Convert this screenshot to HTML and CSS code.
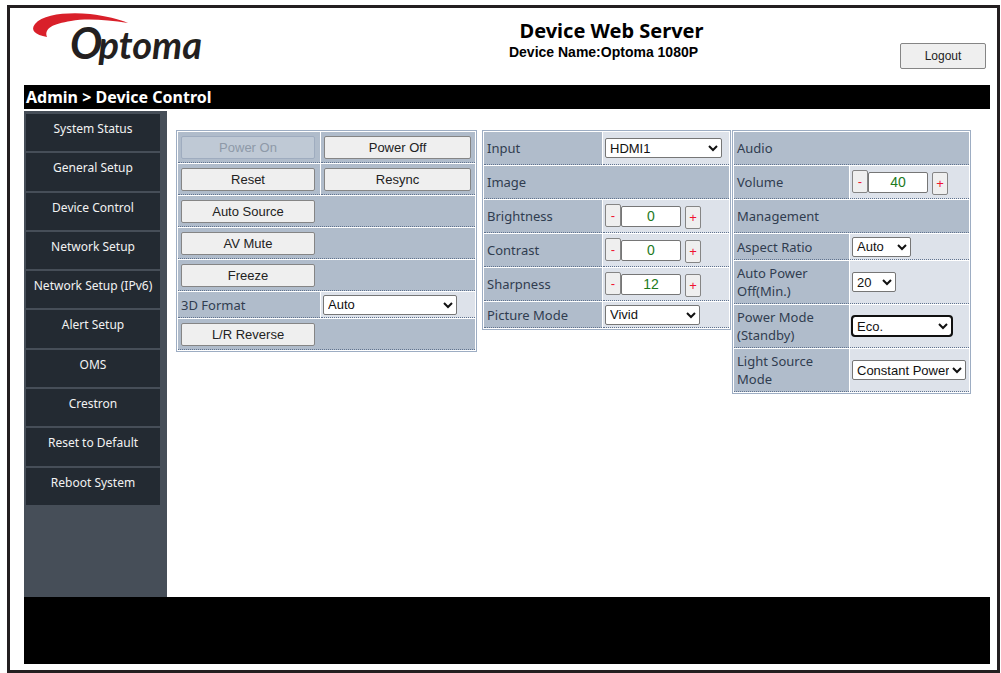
FILE: index.html
```html
<!DOCTYPE html>
<html lang="en">
<head>
<meta charset="utf-8">
<title>Device Web Server</title>
<link rel="stylesheet" href="styles.css">
</head>
<body>
<div class="frame">
  <header class="header">
    <svg class="logo" viewBox="0 0 190 66" role="img" aria-label="Optoma">
      <path class="logo-swoosh" d="M23 24 C11 22 6 17 11 11 C19 1 44 -1 66 1 C82 3 95 6 104 10 C83 7 63 5 47 8 C29 11 20 15 23 24 Z"/>
      <text class="logo-text" x="46" y="46"><tspan class="logo-cap">O</tspan><tspan dx="-4">ptoma</tspan></text>
    </svg>
    <div class="titles">
      <h1 class="title">Device Web Server</h1>
      <p class="device">Device Name:Optoma 1080P</p>
    </div>
    <div class="session"><button class="button logout" type="button">Logout</button></div>
  </header>
  <h2 class="crumb">Admin &gt; Device Control</h2>
  <div class="body">
    <nav class="sidebar">
      <div class="menu">
        <a href="#status">System Status</a>
        <a href="#general">General Setup</a>
        <a href="#control">Device Control</a>
        <a href="#network">Network Setup</a>
        <a href="#ipv6">Network Setup (IPv6)</a>
        <a href="#alert">Alert Setup</a>
        <a href="#oms">OMS</a>
        <a href="#crestron">Crestron</a>
        <a href="#reset">Reset to Default</a>
        <a href="#reboot">Reboot System</a>
      </div>
    </nav>
    <main class="panels">
      <section class="panel panel-power">
        <table class="grid">
          <colgroup><col class="col-power"><col></colgroup>
          <tr><td><button class="button command" type="button" disabled>Power On</button></td><td><button class="button command-wide" type="button">Power Off</button></td></tr>
          <tr><td><button class="button command" type="button">Reset</button></td><td><button class="button command-wide" type="button">Resync</button></td></tr>
          <tr><td colspan="2"><button class="button command" type="button">Auto Source</button></td></tr>
          <tr><td colspan="2"><button class="button command" type="button">AV Mute</button></td></tr>
          <tr><td colspan="2"><button class="button command" type="button">Freeze</button></td></tr>
          <tr class="short"><th><label for="format3d">3D Format</label></th><td class="value"><select class="select-xl" id="format3d"><option>Auto</option></select></td></tr>
          <tr><td colspan="2"><button class="button command" type="button">L/R Reverse</button></td></tr>
        </table>
      </section>
      <section class="panel panel-image">
        <table class="grid tall">
          <colgroup><col class="col-image"><col></colgroup>
          <tr><th><label for="input">Input</label></th><td class="value"><select class="select-l" id="input"><option>HDMI1</option></select></td></tr>
          <tr><th colspan="2">Image</th></tr>
          <tr><th><label for="brightness">Brightness</label></th><td class="value"><div class="stepper"><button class="step minus" type="button">-</button><input id="brightness" type="text" value="0"><button class="step plus" type="button">+</button></div></td></tr>
          <tr><th><label for="contrast">Contrast</label></th><td class="value"><div class="stepper"><button class="step minus" type="button">-</button><input id="contrast" type="text" value="0"><button class="step plus" type="button">+</button></div></td></tr>
          <tr><th><label for="sharpness">Sharpness</label></th><td class="value"><div class="stepper"><button class="step minus" type="button">-</button><input id="sharpness" type="text" value="12"><button class="step plus" type="button">+</button></div></td></tr>
          <tr class="short"><th><label for="picture">Picture Mode</label></th><td class="value"><select class="select-m" id="picture"><option>Vivid</option></select></td></tr>
        </table>
      </section>
      <section class="panel panel-audio">
        <table class="grid tall">
          <colgroup><col class="col-audio"><col></colgroup>
          <tr><th colspan="2">Audio</th></tr>
          <tr><th><label for="volume">Volume</label></th><td class="value"><div class="stepper"><button class="step minus" type="button">-</button><input id="volume" type="text" value="40"><button class="step plus" type="button">+</button></div></td></tr>
          <tr><th colspan="2">Management</th></tr>
          <tr class="short"><th><label for="aspect">Aspect Ratio</label></th><td class="value"><select class="select-s" id="aspect"><option>Auto</option></select></td></tr>
          <tr class="double"><th><label for="autooff">Auto Power<br>Off(Min.)</label></th><td class="value"><select class="select-xs" id="autooff"><option>20</option></select></td></tr>
          <tr class="double"><th><label for="powermode">Power Mode<br>(Standby)</label></th><td class="value"><select class="select-eco" id="powermode"><option>Eco.</option></select></td></tr>
          <tr class="double"><th><label for="light">Light Source<br>Mode</label></th><td class="value"><select class="select-light" id="light"><option>Constant Power</option></select></td></tr>
        </table>
      </section>
    </main>
  </div>
  <footer class="footer"></footer>
</div>
</body>
</html>
```
FILE: styles.css
```css
* { box-sizing: border-box; }

body {
  margin: 0;
  padding: 5px 1px 0 7px;
  background: #fff;
  font-family: "Noto Sans", "Open Sans", sans-serif;
  font-size: 13px;
  line-height: 18px;
}

.frame {
  display: flex;
  flex-direction: column;
  min-height: calc(100vh - 5px);
  padding: 0 7px 6px 14px;
  border: 3px solid #231f20;
}

.header {
  display: grid;
  grid-template-columns: 1fr auto 1fr;
  min-height: 77px;
}

.logo { width: 190px; height: 66px; margin-top: 5px; overflow: visible; }
.logo-swoosh { fill: #d9202a; }
.logo-text {
  fill: #231f20;
  font-family: Lato, sans-serif;
  font-size: 38px;
  font-weight: 700;
  font-style: italic;
}
.logo-cap { font-size: 43px; }

.titles { padding: 11px 0 0 193px; text-align: center; }
.title { margin: 0; padding-left: 16px; font-size: 20px; line-height: 24px; }
.device {
  margin: 0;
  font-family: "Liberation Sans", Arial, sans-serif;
  font-size: 14px;
  font-weight: 700;
}

.session { display: flex; justify-content: flex-end; align-items: flex-start; padding: 35px 4px 0 0; }

.button {
  height: 23px;
  padding: 0;
  border: 1px solid #858585;
  border-radius: 2px;
  background: #efefef;
  color: #222;
  font: 13px "Liberation Sans", Arial, sans-serif;
}
.button:disabled {
  border-color: #9facbf;
  background: #bfc9d5;
  color: #8e99a8;
}
.logout { width: 86px; height: 26px; font-size: 12px; }
.command { width: 134px; }
.command-wide { width: 147px; }

.crumb {
  margin: 0 0 2px;
  padding: 0 2px;
  background: #000;
  color: #fff;
  font-size: 16px;
  line-height: 24px;
}

.body { display: flex; flex: 1; }

.sidebar {
  flex: 0 0 143px;
  padding: 3px 7px 3px 2px;
  background: #464e58;
}
.menu {
  display: grid;
  grid-auto-rows: 1fr;
  gap: 2px;
  min-height: 391px;
}
.menu a {
  padding-top: 6px;
  background: #232a32;
  color: #f2f2f2;
  font-size: 12px;
  text-align: center;
  text-decoration: none;
  white-space: nowrap;
}

.panels {
  display: flex;
  align-items: flex-start;
  flex: 1;
  padding: 19px 19px 0 9px;
}
.panel { min-width: 0; }
.panel-power { flex: 301 1 0; margin-right: 5px; }
.panel-image { flex: 249 1 0; margin-right: 1px; }
.panel-audio { flex: 239 1 0; }

.grid {
  width: 100%;
  table-layout: fixed;
  border: 1px solid #9dadc3;
  border-spacing: 1px;
  background: #fff;
  color: #303d50;
}
.col-power { width: 142px; }
.col-image { width: 118px; }
.col-audio { width: 115px; }
.grid th, .grid td {
  height: 31px;
  padding: 0 3px;
  border-bottom: 1px dotted #60738f;
  background: #b0bccb;
  text-align: left;
  font-weight: 400;
  vertical-align: middle;
  font-size: 13px;
}
.grid .value { padding: 0 2px; background: #dde2ea; }
.grid.tall th, .grid.tall td { height: 33px; }
.grid .short th, .grid .short td { height: 26px; }
.grid .double th, .grid .double td { height: 43px; }
.grid button, .grid select { display: block; }

select {
  height: 20px;
  border: 1px solid #767676;
  border-radius: 2px;
  background-color: #fff;
  color: #111;
  font: 13px "Liberation Sans", Arial, sans-serif;
}
.select-xl { width: 134px; }
.select-l { width: 117px; }
.select-m { width: 95px; }
.select-s { width: 59px; }
.select-xs { width: 44px; }
.select-eco { width: 100px; outline: 2px solid #101010; outline-offset: -1px; border-radius: 3px; }
.select-light { width: 114px; }

.stepper { display: flex; align-items: center; min-height: 25px; }
.stepper input {
  width: 60px;
  height: 21px;
  padding: 0;
  border: 1px solid #767676;
  border-radius: 2px;
  background: #fff;
  color: #1c7a1c;
  text-align: center;
  font: 14px "Liberation Sans", Arial, sans-serif;
}
.step {
  width: 16px;
  height: 23px;
  padding: 0;
  border: 1px solid #858585;
  border-radius: 2px;
  background: #efefef;
  color: #f0142f;
  font: 13px "Liberation Sans", Arial, sans-serif;
}
.minus { align-self: flex-start; }
.plus { align-self: flex-end; margin-left: 4px; }

.footer { min-height: 67px; background: #000; }
```
